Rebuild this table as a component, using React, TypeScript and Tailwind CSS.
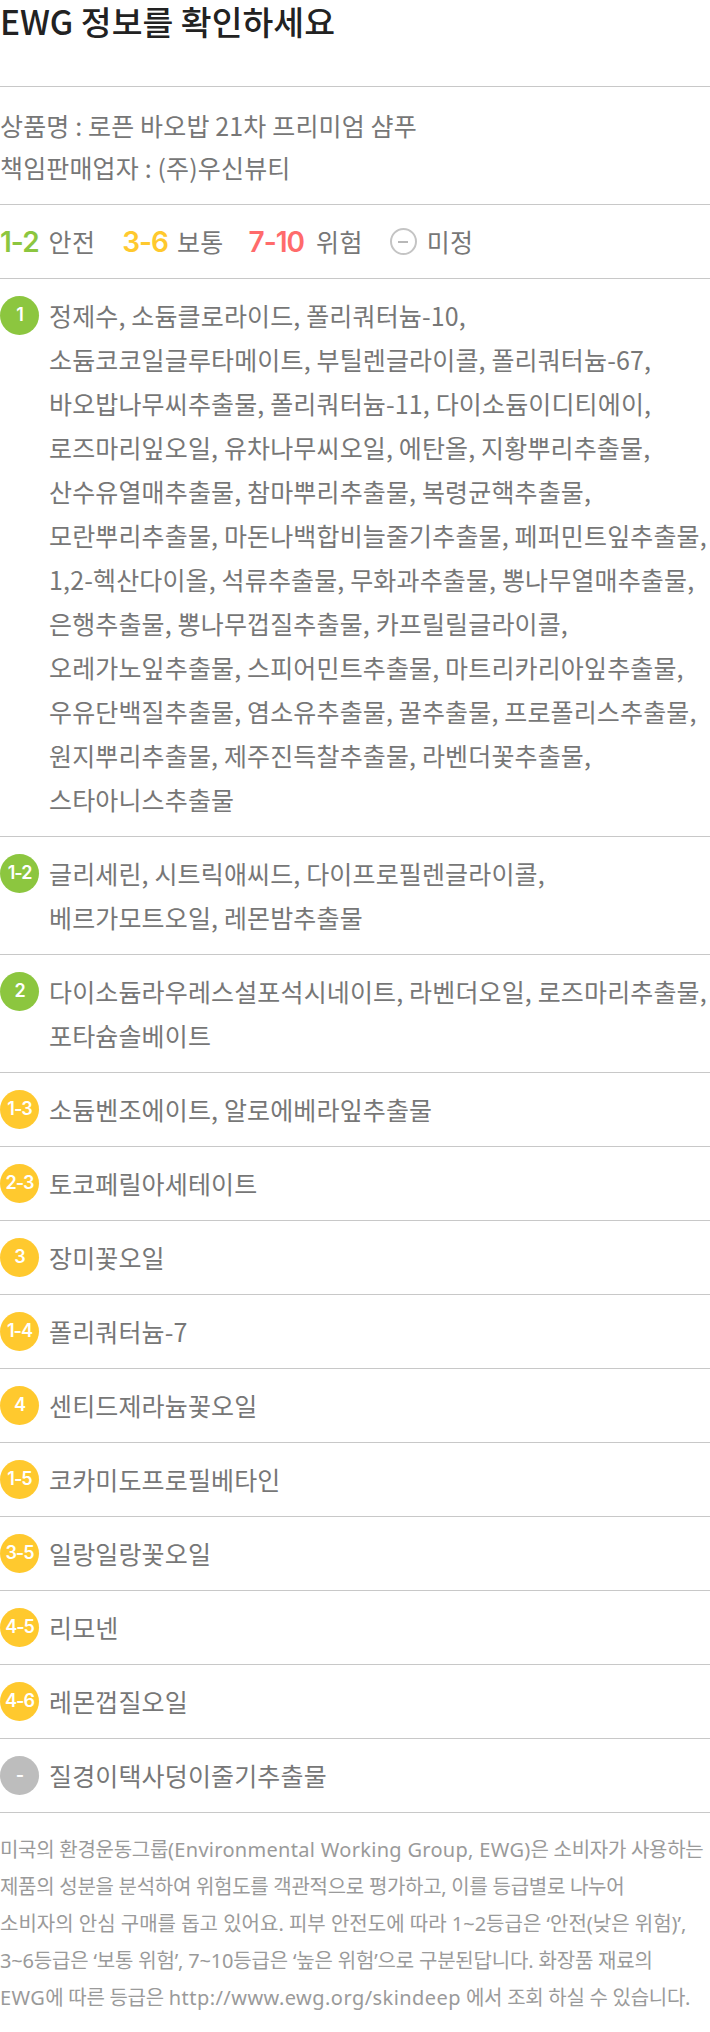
import React from "react";

const KR = '"Noto Sans CJK KR", "Noto Sans", sans-serif';
const MIX = '"Noto Sans", "Noto Sans CJK KR", sans-serif';

type Item = { g: string; c: "green" | "yellow" | "gray"; lines: string[] };

const items: Item[] = [
  {
    g: "1",
    c: "green",
    lines: [
      "정제수, 소듐클로라이드, 폴리쿼터늄-10,",
      "소듐코코일글루타메이트, 부틸렌글라이콜, 폴리쿼터늄-67,",
      "바오밥나무씨추출물, 폴리쿼터늄-11, 다이소듐이디티에이,",
      "로즈마리잎오일, 유차나무씨오일, 에탄올, 지황뿌리추출물,",
      "산수유열매추출물, 참마뿌리추출물, 복령균핵추출물,",
      "모란뿌리추출물, 마돈나백합비늘줄기추출물, 페퍼민트잎추출물,",
      "1,2-헥산다이올, 석류추출물, 무화과추출물, 뽕나무열매추출물,",
      "은행추출물, 뽕나무껍질추출물, 카프릴릴글라이콜,",
      "오레가노잎추출물, 스피어민트추출물, 마트리카리아잎추출물,",
      "우유단백질추출물, 염소유추출물, 꿀추출물, 프로폴리스추출물,",
      "원지뿌리추출물, 제주진득찰추출물, 라벤더꽃추출물,",
      "스타아니스추출물",
    ],
  },
  { g: "1-2", c: "green", lines: ["글리세린, 시트릭애씨드, 다이프로필렌글라이콜,", "베르가모트오일, 레몬밤추출물"] },
  { g: "2", c: "green", lines: ["다이소듐라우레스설포석시네이트, 라벤더오일, 로즈마리추출물,", "포타슘솔베이트"] },
  { g: "1-3", c: "yellow", lines: ["소듐벤조에이트, 알로에베라잎추출물"] },
  { g: "2-3", c: "yellow", lines: ["토코페릴아세테이트"] },
  { g: "3", c: "yellow", lines: ["장미꽃오일"] },
  { g: "1-4", c: "yellow", lines: ["폴리쿼터늄-7"] },
  { g: "4", c: "yellow", lines: ["센티드제라늄꽃오일"] },
  { g: "1-5", c: "yellow", lines: ["코카미도프로필베타인"] },
  { g: "3-5", c: "yellow", lines: ["일랑일랑꽃오일"] },
  { g: "4-5", c: "yellow", lines: ["리모넨"] },
  { g: "4-6", c: "yellow", lines: ["레몬껍질오일"] },
  { g: "-", c: "gray", lines: ["질경이택사덩이줄기추출물"] },
];

const badgeBg: Record<Item["c"], string> = {
  green: "bg-[#8cc63f]",
  yellow: "bg-[#ffc92e]",
  gray: "bg-[#bdbdbd]",
};

function Badge({ g, c }: { g: string; c: Item["c"] }) {
  return (
    <div
      className={`${badgeBg[c]} w-[39px] h-[39px] shrink-0 rounded-full flex items-center justify-center text-white font-semibold text-[18px] tracking-[-1px] leading-none`}
      style={{ fontFamily: '"Inter", "Noto Sans", sans-serif' }}
    >
      {g}
    </div>
  );
}

function Row({ item }: { item: Item }) {
  return (
    <div className="border-t border-[#c8c8c8] pt-[14px] pb-[15px] flex items-start gap-[10px]">
      <div className="h-[44px] flex items-center">
        <Badge g={item.g} c={item.c} />
      </div>
      <div className="text-[25px] leading-[44px] tracking-[0.15px] text-[#777] whitespace-nowrap">
        {item.lines.map((l, i) => (
          <div key={i}>{l}</div>
        ))}
      </div>
    </div>
  );
}

function L({ children }: { children: React.ReactNode }) {
  return <span className="tracking-[0.3px]">{children}</span>;
}

export default function App() {
  const num = { fontFamily: '"Inter", "Noto Sans", sans-serif' };
  return (
    <div className="w-[710px] bg-white" style={{ fontFamily: KR }}>
      <div className="h-[86px] pt-[1px]">
        <h1 className="text-[33.5px] leading-[40px] font-medium text-[#222]">EWG 정보를 확인하세요</h1>
      </div>

      <div className="border-t border-[#c8c8c8] pt-[17px] pb-[16px] text-[25px] leading-[42px] tracking-[0.15px] text-[#777]">
        <div>상품명 : 로픈 바오밥 21차 프리미엄 샴푸</div>
        <div>책임판매업자 : (주)우신뷰티</div>
      </div>

      <div className="border-t border-[#c8c8c8] h-[74px] flex items-center text-[25px] tracking-[0.3px] text-[#777]">
        <span className="text-[28px] font-semibold text-[#8cc63f] tracking-[-1px]" style={num}>1-2</span>
        <span className="ml-[10px]">안전</span>
        <span className="ml-[27px] text-[28px] font-semibold text-[#ffc92e] tracking-[-1px]" style={num}>3-6</span>
        <span className="ml-[9px]">보통</span>
        <span className="ml-[25px] text-[28px] font-semibold text-[#ff6b6b] tracking-[-1px]" style={num}>7-10</span>
        <span className="ml-[12px]">위험</span>
        <span className="ml-[27px] w-[27px] h-[27px] rounded-full border-2 border-[#c4c4c4] flex items-center justify-center">
          <span className="block w-[10px] h-[2px] bg-[#b8b8b8]" />
        </span>
        <span className="ml-[10px]">미정</span>
      </div>

      {items.map((it, i) => (
        <Row key={i} item={it} />
      ))}

      <div
        className="border-t border-[#c8c8c8] pt-[18px] pb-[19px] text-[20px] leading-[37px] tracking-[-0.28px] text-[#9a9a9a] whitespace-nowrap"
        style={{ fontFamily: MIX }}
      >
        <div>
          미국의 환경운동그룹<L>(Environmental Working Group, EWG)</L>은 소비자가 사용하는
        </div>
        <div>제품의 성분을 분석하여 위험도를 객관적으로 평가하고, 이를 등급별로 나누어</div>
        <div className="tracking-[0px]">소비자의 안심 구매를 돕고 있어요. 피부 안전도에 따라 1~2등급은 ‘안전(낮은 위험)’,</div>
        <div className="tracking-[-0.18px]">3~6등급은 ‘보통 위험’, 7~10등급은 ‘높은 위험’으로 구분된답니다. 화장품 재료의</div>
        <div>
          <span className="tracking-[0.4px]">EWG</span>에 따른 등급은{" "}
          <span className="tracking-[0.45px]">http://www.ewg.org/skindeep</span> 에서 조회 하실 수 있습니다.
        </div>
      </div>
    </div>
  );
}
